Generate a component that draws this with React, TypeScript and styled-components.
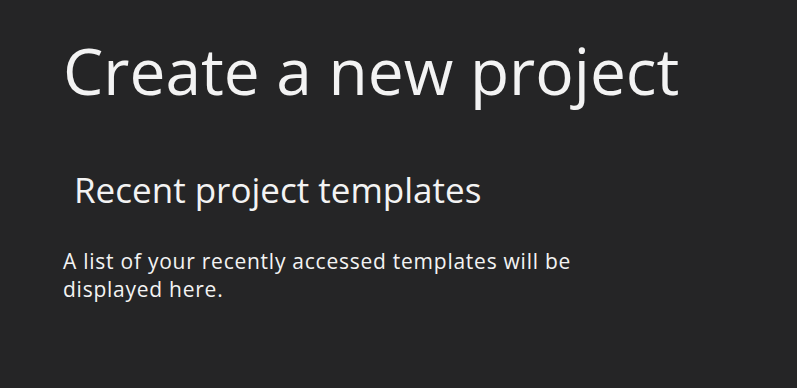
import React from "react";
import styled, { createGlobalStyle } from "styled-components";

const GlobalStyle = createGlobalStyle`
  html, body {
    margin: 0;
    padding: 0;
    background: #252526;
  }
  body {
    font-family: "Open Sans", "Noto Sans", sans-serif;
  }
`;

const Page = styled.div`
  width: 797px;
  height: 388px;
  box-sizing: border-box;
  padding: 27px 0 0 63px;
  background: #252526;
  color: #f3f3f3;
  overflow: hidden;
`;

const Title = styled.h1`
  margin: 0;
  font-size: 64px;
  font-weight: 400;
  line-height: 88px;
`;

const Section = styled.section`
  margin-top: 52px;
`;

const SectionTitle = styled.h2`
  margin: 0 0 0 11px;
  font-size: 35px;
  font-weight: 400;
  line-height: 46px;
`;

const Hint = styled.p`
  margin: 34px 0 0;
  width: 580px;
  font-size: 21px;
  letter-spacing: 0.75px;
  line-height: 28px;
`;

export default function App() {
  return (
    <>
      <GlobalStyle />
      <Page>
        <Title>Create a new project</Title>
        <Section>
          <SectionTitle>Recent project templates</SectionTitle>
          <Hint>
            A list of your recently accessed templates will be displayed here.
          </Hint>
        </Section>
      </Page>
    </>
  );
}
